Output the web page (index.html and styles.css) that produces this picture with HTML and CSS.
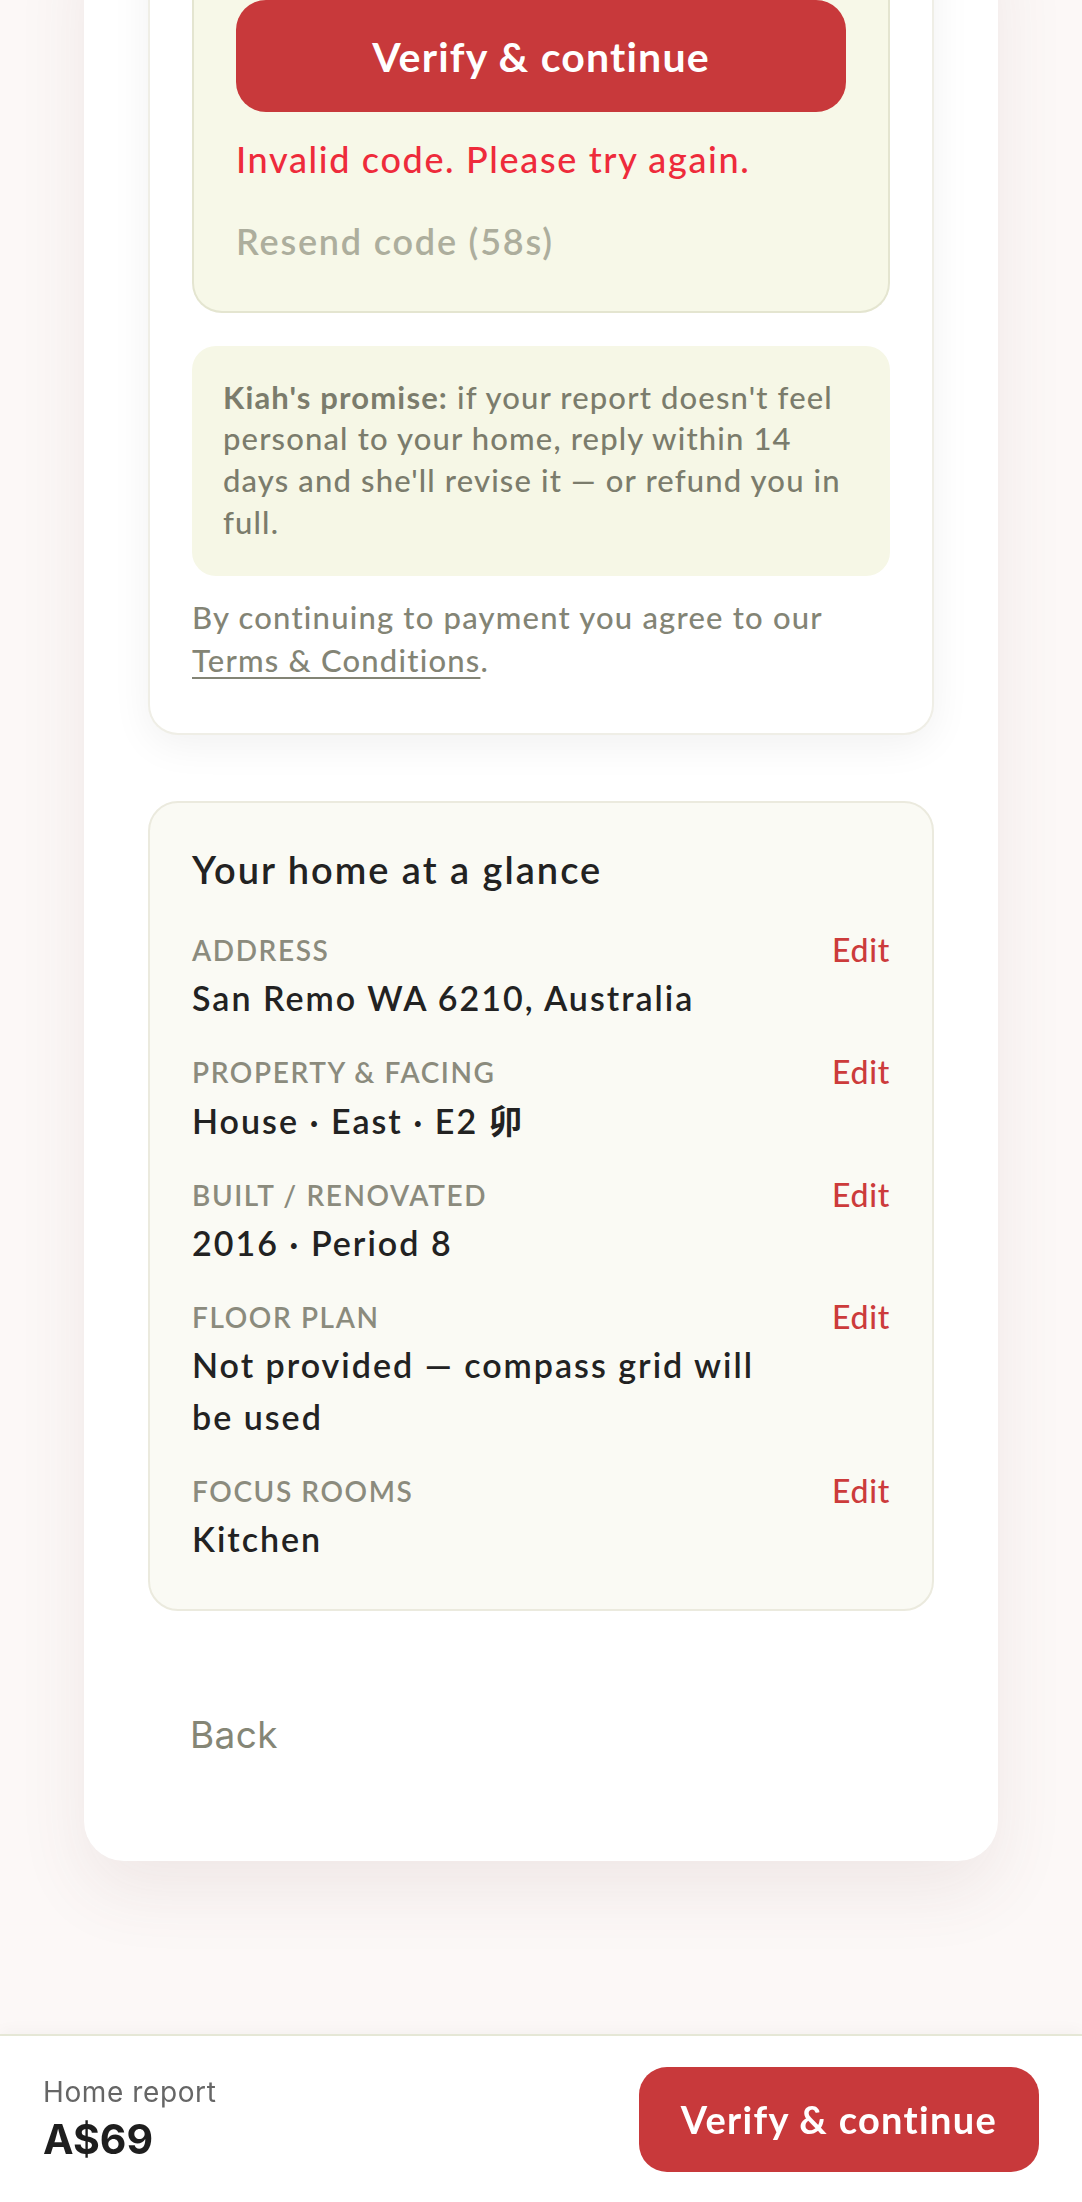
FILE: index.html
```html
<!DOCTYPE html>
<html lang="en">
<head>
  <meta charset="UTF-8" />
  <meta name="viewport" content="width=device-width, initial-scale=1.0"/>
  <title>Home report – Verify &amp; continue</title>
  <link rel="stylesheet" href="styles.css">
</head>
<body>
  <main class="page">
    <section class="shell">

      <div class="checkout">
        <div class="otp">
          <button class="btn btn-primary btn-block">Verify &amp; continue</button>
          <p class="otp-error">Invalid code. Please try again.</p>
          <p class="otp-resend">Resend code (58s)</p>
        </div>

        <p class="promise"><strong>Kiah's promise:</strong> if your report doesn't feel personal to your home, reply within 14 days and she'll revise it — or refund you in full.</p>

        <p class="terms">By continuing to payment you agree to our <a href="#">Terms &amp; Conditions</a>.</p>
      </div>

      <div class="glance">
        <h2 class="glance-title">Your home at a glance</h2>

        <div class="glance-row">
          <div class="glance-info">
            <div class="glance-label">Address</div>
            <div class="glance-value">San Remo WA 6210, Australia</div>
          </div>
          <a href="#" class="glance-edit">Edit</a>
        </div>

        <div class="glance-row">
          <div class="glance-info">
            <div class="glance-label">Property &amp; Facing</div>
            <div class="glance-value">House · East · E2 <span class="cjk">卯</span></div>
          </div>
          <a href="#" class="glance-edit">Edit</a>
        </div>

        <div class="glance-row">
          <div class="glance-info">
            <div class="glance-label">Built / Renovated</div>
            <div class="glance-value">2016 · Period 8</div>
          </div>
          <a href="#" class="glance-edit">Edit</a>
        </div>

        <div class="glance-row">
          <div class="glance-info">
            <div class="glance-label">Floor plan</div>
            <div class="glance-value">Not provided — compass grid will be used</div>
          </div>
          <a href="#" class="glance-edit">Edit</a>
        </div>

        <div class="glance-row">
          <div class="glance-info">
            <div class="glance-label">Focus rooms</div>
            <div class="glance-value">Kitchen</div>
          </div>
          <a href="#" class="glance-edit">Edit</a>
        </div>
      </div>

      <button class="back">Back</button>
    </section>
  </main>

  <footer class="paybar">
    <div class="paybar-price">
      <div class="paybar-label">Home report</div>
      <div class="paybar-amount">A$69</div>
    </div>
    <button class="btn btn-primary btn-small">Verify &amp; continue</button>
  </footer>
</body>
</html>
```

FILE: styles.css
```css
body {
  font-family: 'Lato', 'Noto Sans', sans-serif;
  margin: 0;
  background: #fcf8f7;
  color: #222;
  min-height: 2202px;
}

p {
  margin: 0;
}

.page {
  margin-top: -80px;
}

/* big white sheet */
.shell {
  margin: 0 84px;
  padding: 0 64px 104px;
  background: #fff;
  border-radius: 0 0 40px 40px;
  box-shadow: 0 30px 70px rgba(110, 70, 70, 0.09);
}

.checkout {
  background: #fff;
  border: 2px solid #efeee6;
  border-top: none;
  border-radius: 0 0 30px 30px;
  padding: 44px 42px 51px;
  box-shadow: 0 10px 40px rgba(0, 0, 0, 0.06);
}

.otp {
  background: #f7f8e8;
  border: 2px solid #e4e5d0;
  border-top: none;
  border-radius: 0 0 30px 30px;
  padding: 36px 42px 44px;
}

.btn {
  font-family: 'Lato', sans-serif;
  font-weight: 700;
  color: #fff;
  background: #c8393b;
  border: none;
  cursor: pointer;
}

.btn-block {
  display: block;
  width: 100%;
  height: 112px;
  border-radius: 30px;
  font-size: 41px;
  letter-spacing: 1.2px;
}

.btn-small {
  height: 105px;
  padding: 0 42px;
  border-radius: 28px;
  font-size: 38px;
  letter-spacing: 1.3px;
}

.otp-error {
  margin-top: 22px;
  font-size: 36px;
  line-height: 1.4;
  font-weight: 500;
  color: #ee2b3b;
  letter-spacing: 1.65px;
}

.otp-resend {
  margin-top: 32px;
  font-size: 36px;
  line-height: 1.4;
  font-weight: 600;
  color: #adae9d;
  letter-spacing: 1.8px;
}

.promise {
  margin-top: 33px;
  background: #f6f7e6;
  border-radius: 24px;
  padding: 31px 38px 33px 31px;
  font-size: 31px;
  line-height: 41.6px;
  font-weight: 500;
  color: #7b7c6c;
  letter-spacing: 1.15px;
}

.promise strong {
  font-weight: 700;
}

.terms {
  margin-top: 20px;
  font-size: 31px;
  line-height: 43px;
  font-weight: 500;
  color: #838475;
  letter-spacing: 1.2px;
}

.terms a {
  color: inherit;
  text-decoration: underline;
  text-decoration-thickness: 2px;
  text-underline-offset: 5px;
}

.glance {
  margin-top: 66px;
  background: #fafaf4;
  border: 2px solid #ebeade;
  border-radius: 30px;
  padding: 42px 42px 44px;
}

.glance-title {
  margin: 0 0 37px;
  font-size: 38px;
  line-height: 1.3;
  font-weight: 600;
  letter-spacing: 2px;
  color: #222;
}

.glance-row {
  display: flex;
  align-items: flex-start;
  gap: 40px;
}

.glance-row + .glance-row {
  margin-top: 30px;
}

.glance-info {
  flex: 1;
}

.glance-label {
  font-size: 28px;
  line-height: 36px;
  font-weight: 600;
  text-transform: uppercase;
  letter-spacing: 1.6px;
  color: #8b8b7d;
}

.glance-value {
  margin-top: 4px;
  font-size: 34px;
  line-height: 52px;
  font-weight: 600;
  letter-spacing: 2px;
  color: #222;
}

.cjk {
  font-family: 'Noto Sans CJK SC', sans-serif;
  font-weight: 700;
}

.glance-edit {
  font-size: 32px;
  line-height: 36px;
  font-weight: 500;
  letter-spacing: 0.7px;
  color: #cc3b3b;
  text-decoration: none;
}

.back {
  display: block;
  margin-top: 102px;
  padding: 0 0 0 42px;
  background: none;
  border: none;
  font-family: 'Inter', sans-serif;
  font-size: 37px;
  line-height: 44px;
  letter-spacing: 0.4px;
  color: #858676;
  cursor: pointer;
}

/* sticky price bar */
.paybar {
  position: fixed;
  left: 0;
  right: 0;
  bottom: 0;
  height: 168px;
  box-sizing: border-box;
  display: flex;
  align-items: center;
  justify-content: space-between;
  padding: 0 43px;
  background: #fff;
  border-top: 2px solid #e5e7d6;
  box-shadow: 0 -4px 14px rgba(0, 0, 0, 0.03);
}

.paybar-price {
  font-family: 'Inter', sans-serif;
}

.paybar-label {
  font-size: 28px;
  line-height: 1.3;
  letter-spacing: 0.6px;
  color: #666;
}

.paybar-amount {
  margin-top: 5px;
  font-size: 41px;
  line-height: 1.2;
  font-weight: 700;
  color: #1e1e1e;
}
```
